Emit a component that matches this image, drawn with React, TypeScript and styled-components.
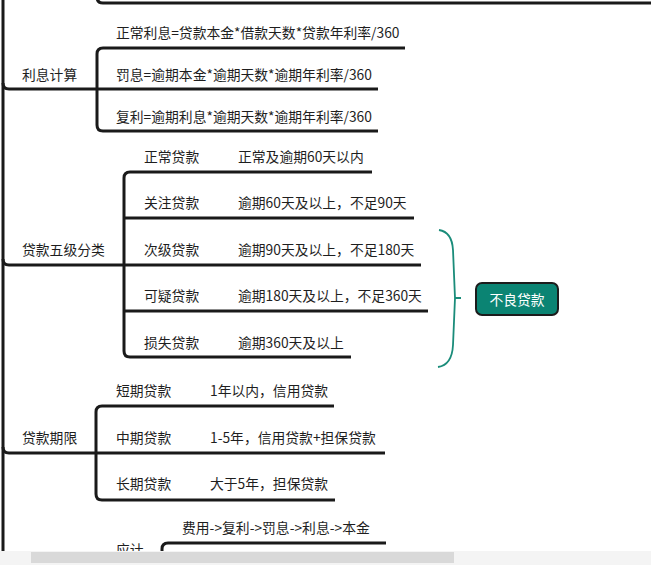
import React from "react";
import styled, { createGlobalStyle } from "styled-components";

const Global = createGlobalStyle`
  html, body { margin: 0; padding: 0; background: #fff; overflow: hidden; }
  body { font-family: "Noto Sans CJK SC", "Noto Sans", sans-serif; }
`;

const Canvas = styled.div`
  position: relative;
  width: 651px;
  height: 565px;
  overflow: hidden;
  background: #fff;
`;

const Lines = styled.svg`
  position: absolute;
  left: 0;
  top: 0;
`;

const Label = styled.div<{ $x: number; $y: number }>`
  position: absolute;
  left: ${(p) => p.$x}px;
  top: ${(p) => p.$y - 11}px;
  font-size: 13.8px;
  line-height: 22px;
  color: #1e1e1e;
  white-space: nowrap;
`;

const Tag = styled.div`
  position: absolute;
  left: 475px;
  top: 282px;
  width: 84px;
  height: 34px;
  box-sizing: border-box;
  border: 2.5px solid #1c1c1c;
  border-radius: 7px;
  background: #0b8473;
  color: #fff;
  font-size: 13.8px;
  display: flex;
  align-items: center;
  justify-content: center;
`;

const ScrollTrack = styled.div`
  position: absolute;
  left: 0;
  bottom: 0;
  width: 651px;
  height: 14px;
  background: #f4f4f4;
`;

const Thumb = styled.div`
  margin: 1px 0 0 31px;
  width: 423px;
  height: 11px;
  background: #d9d9d9;
`;

const S = "#1a1a1a";

const bracket = (x: number, y1: number, y2: number) =>
  `M${x} ${y1 + 6} Q${x} ${y1} ${x + 6} ${y1} M${x} ${y1 + 6} L${x} ${y2 - 6} Q${x} ${y2} ${x + 6} ${y2}`;

const labels: [number, number, string][] = [
  [116, 32, "正常利息=贷款本金*借款天数*贷款年利率/360"],
  [22, 74, "利息计算"],
  [116, 74, "罚息=逾期本金*逾期天数*逾期年利率/360"],
  [116, 116, "复利=逾期利息*逾期天数*逾期年利率/360"],
  [144, 156, "正常贷款"],
  [238, 156, "正常及逾期60天以内"],
  [144, 202, "关注贷款"],
  [238, 202, "逾期60天及以上，不足90天"],
  [22, 249, "贷款五级分类"],
  [144, 249, "次级贷款"],
  [238, 249, "逾期90天及以上，不足180天"],
  [144, 295, "可疑贷款"],
  [238, 295, "逾期180天及以上，不足360天"],
  [144, 342, "损失贷款"],
  [238, 342, "逾期360天及以上"],
  [116, 390, "短期贷款"],
  [210, 390, "1年以内，信用贷款"],
  [22, 437, "贷款期限"],
  [116, 437, "中期贷款"],
  [210, 437, "1-5年，信用贷款+担保贷款"],
  [116, 483, "长期贷款"],
  [210, 483, "大于5年，担保贷款"],
  [182, 527, "费用->复利->罚息->利息->本金"],
  [116, 549, "应计"],
];

export default function App() {
  return (
    <Canvas>
      <Global />
      <Lines width="651" height="565" fill="none" stroke={S} strokeWidth="3" strokeLinecap="butt">
        <path d="M3 0 L3 565" />
        <path d="M97 -10 L97 -3 Q97 3 103 3 L651 3" />
        <path d="M3 83 Q3 89 9 89 L97 89" />
        <path d={bracket(97, 48, 131)} />
        <path d="M103 48 L405 48 M97 89 L378 89 M103 131 L378 131" />
        <path d="M3 259 Q3 265 9 265 L124 265" />
        <path d={bracket(124, 172, 357)} />
        <path d="M130 172 L372 172 M124 218 L414 218 M124 265 L421 265 M124 311 L428 311 M130 357 L351 357" />
        <path d="M3 447 Q3 453 9 453 L96 453" />
        <path d={bracket(96, 406, 500)} />
        <path d="M102 406 L334 406 M96 453 L385 453 M102 500 L335 500" />
        <path d="M162 560 L162 549 Q162 543 168 543 L386 543" />
        <path
          d="M439 230 Q452 232 453 250 L455 298 L461 298 M455 298 L453 345 Q452 365 438 367"
          stroke="#1a8c7a"
          strokeWidth="1.8"
        />
      </Lines>
      {labels.map(([x, y, t], i) => (
        <Label key={i} $x={x} $y={y}>
          {t}
        </Label>
      ))}
      <Tag>不良贷款</Tag>
      <ScrollTrack>
        <Thumb />
      </ScrollTrack>
    </Canvas>
  );
}
